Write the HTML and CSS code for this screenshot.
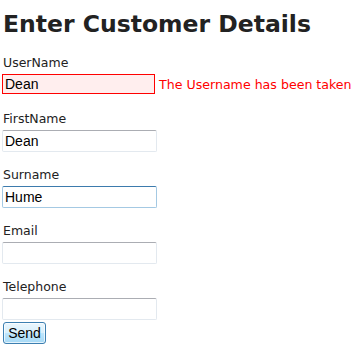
FILE: index.html
```html
<!DOCTYPE html>
<html lang="en">
<head>
    <meta charset="UTF-8">
    <title>Enter Customer Details</title>
    <link rel="stylesheet" href="styles.css">
</head>
<body>
    <h1>Enter Customer Details</h1>
    <form class="customer-form">
        <div class="field">
            <label for="userName">UserName</label>
            <div class="field-row">
                <input type="text" id="userName" class="input-error" value="Dean">
                <span class="error-message">The Username has been taken</span>
            </div>
        </div>
        <div class="field">
            <label for="firstName">FirstName</label>
            <input type="text" id="firstName" value="Dean">
        </div>
        <div class="field">
            <label for="surname">Surname</label>
            <input type="text" id="surname" class="input-focus" value="Hume">
        </div>
        <div class="field">
            <label for="email">Email</label>
            <input type="text" id="email">
        </div>
        <div class="field">
            <label for="telephone">Telephone</label>
            <input type="text" id="telephone">
        </div>
        <button type="submit" class="send-btn">Send</button>
    </form>
</body>
</html>
```

FILE: styles.css
```css
body {
    font-family: 'DejaVu Sans', Verdana, sans-serif;
    color: #222222;
    background-color: #ffffff;
    margin: 0;
    padding: 0 2px;
}
h1 {
    font-size: 23.5px;
    font-weight: bold;
    margin: 9px 0 0 1px;
    line-height: 30px;
}
.customer-form {
    display: flex;
    flex-direction: column;
    margin-top: 16px;
}
.field {
    display: flex;
    flex-direction: column;
    height: 56px;
}
.field label {
    font-size: 12.5px;
    line-height: 15px;
    margin-left: 1px;
    margin-bottom: 4px;
}
.field-row {
    display: flex;
    align-items: center;
}
input {
    font-family: 'Liberation Sans', Arial, sans-serif;
    font-size: 14px;
    color: #000000;
    width: 155px;
    height: 22px;
    box-sizing: border-box;
    padding: 1px 2px;
    margin: 0;
    border: 1px solid #e3e9ef;
    border-top-color: #abadb3;
    border-radius: 2px;
    outline: none;
    background: #ffffff;
}
.input-error {
    width: 153px;
    height: 20px;
    border: 1px solid #ff0000;
    border-radius: 0;
    background-color: #ffeeee;
}
.input-focus {
    border-color: #a4c9e3;
    border-top-color: #3d7bad;
}
.error-message {
    color: #ff0000;
    font-size: 12.6px;
    margin-left: 4px;
    white-space: nowrap;
}
.send-btn {
    align-self: flex-start;
    font-family: 'Liberation Sans', Arial, sans-serif;
    font-size: 14px;
    color: #000000;
    width: 43px;
    height: 22px;
    margin: -13px 0 0 1px;
    padding: 0;
    border: 1px solid #3c7fb1;
    border-radius: 3px;
    background: linear-gradient(#eaf6fd 0%, #d9f0fc 50%, #bee6fd 51%, #a7d9f5 100%);
    box-shadow: inset 0 0 0 1px rgba(255, 255, 255, 0.7);
}
```
